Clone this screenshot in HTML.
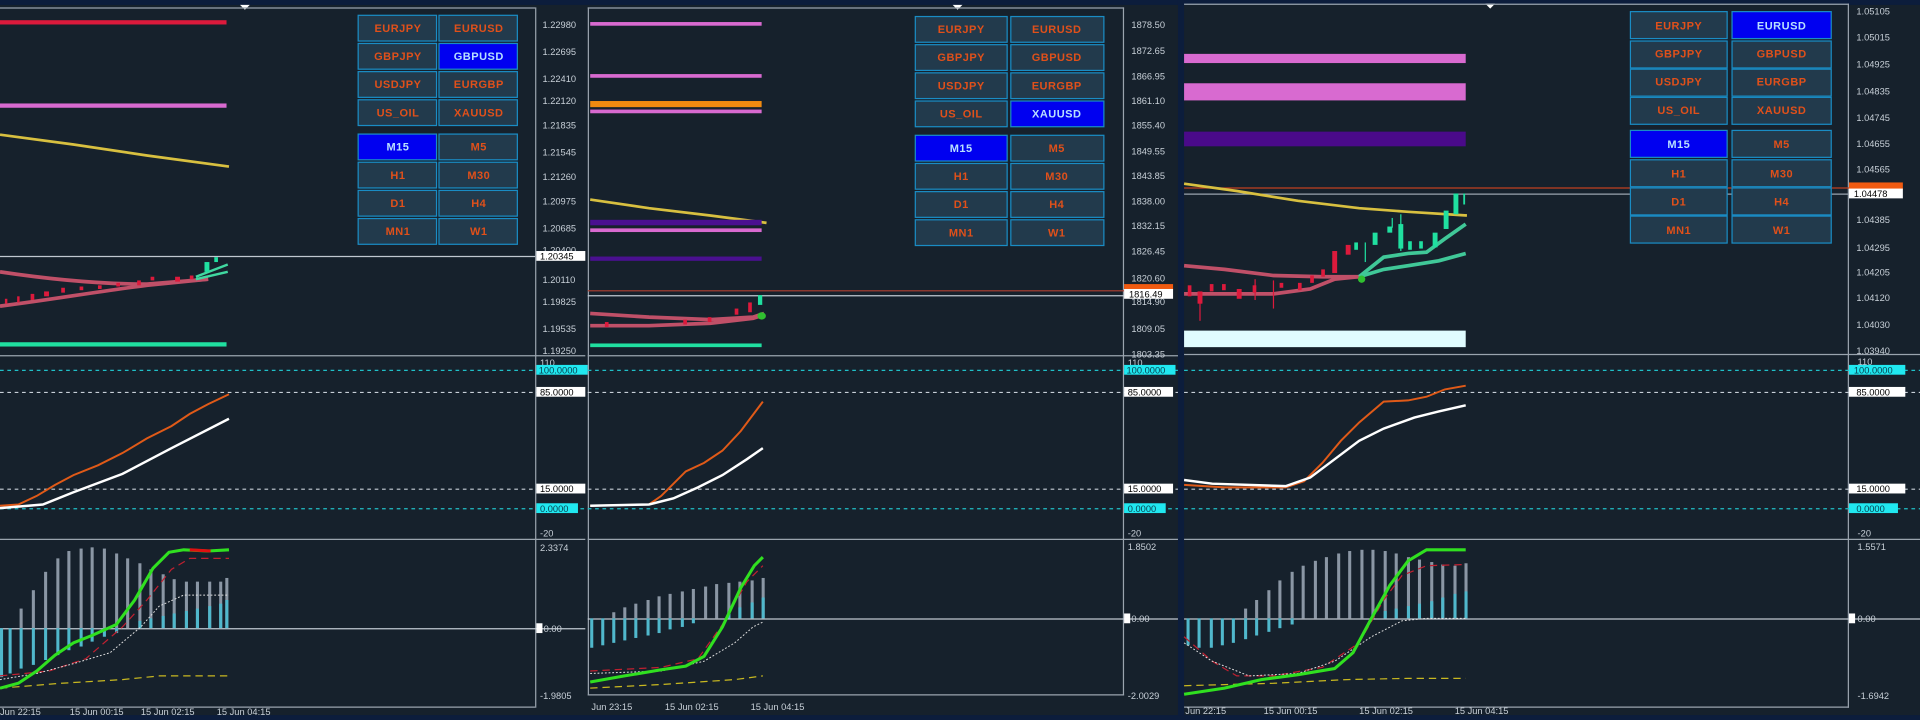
<!DOCTYPE html>
<html><head><meta charset="utf-8"><style>
html,body{margin:0;padding:0;background:#16212c;overflow:hidden}
svg{display:block}
text{font-family:"Liberation Sans",sans-serif}
.ax{fill:#c8d0d8;font-size:7.6px}
.bt{fill:#e0501a;font-size:9px;font-weight:bold;text-anchor:middle;letter-spacing:0.4px}
.bs{fill:#b8e0ff;font-size:9px;font-weight:bold;text-anchor:middle;letter-spacing:0.4px}
.dt{fill:#c8d0d8;font-size:7.6px}
</style></head><body>
<svg width="1920" height="720" viewBox="0 0 1568 588" preserveAspectRatio="none" xmlns="http://www.w3.org/2000/svg">
<defs>
<g id="btn">
<rect x="0.5" y="0.5" width="64" height="21" fill="#223a4c" stroke="#1a8cc4"/>
</g>
</defs>
<rect width="1568" height="588" fill="#16212c"/>
<!-- top strip -->
<rect x="0" y="0" width="1568" height="4" fill="#0c1d3c"/>
<rect x="962" y="0" width="5" height="588" fill="#0c1d3c"/>
<rect x="0" y="584" width="1568" height="4" fill="#0c1d3c"/>
<!-- top triangles -->
<path d="M196 4 L204 4 L200 8 Z" fill="#fff"/>
<path d="M778 4 L786 4 L782 8 Z" fill="#fff"/>
<path d="M1213 3 L1221 3 L1217 7 Z" fill="#fff"/>

<!-- ================= PANEL 1 ================= -->
<g stroke="#9aa4ae" stroke-width="1" fill="none">
<line x1="0" y1="6.5" x2="437" y2="6.5"/>
<line x1="437.5" y1="6" x2="437.5" y2="578"/>
<line x1="0" y1="290.5" x2="478" y2="290.5"/>
<line x1="0" y1="440.5" x2="478" y2="440.5"/>
<line x1="0" y1="577.5" x2="437" y2="577.5"/>
</g>
<rect x="0" y="16.5" width="185" height="3.5" fill="#dc1a3c"/>
<rect x="0" y="84.5" width="185" height="3.5" fill="#d86ad0"/>
<path d="M0 110 L60 118 L120 127 L187 136" stroke="#d8c040" stroke-width="2.2" fill="none"/>
<line x1="0" y1="209.5" x2="437" y2="209.5" stroke="#c0c8d0" stroke-width="1"/>
<path d="M0 222 C40 228 80 232 120 232 L170 228" stroke="#c05068" stroke-width="3" fill="none"/>
<path d="M0 250 C40 245 80 238 120 233 L170 228" stroke="#c05068" stroke-width="3" fill="none"/>
<g fill="#dc1a3c">
<rect x="4" y="244" width="2" height="4"/><rect x="14" y="242" width="2" height="5"/><rect x="25" y="240" width="3" height="5"/><rect x="36" y="238" width="4" height="4"/><rect x="50" y="235" width="3" height="4"/><rect x="65" y="234" width="3" height="3"/><rect x="80" y="233" width="3" height="3"/><rect x="95" y="231" width="3" height="3"/><rect x="112" y="229" width="3" height="4"/><rect x="123" y="226" width="3" height="3"/><rect x="143" y="226" width="4" height="4"/><rect x="155" y="225" width="3" height="3"/>
</g>
<path d="M160 226 L186 216 M160 228 L186 222" stroke="#40d8a0" stroke-width="2" fill="none"/>
<rect x="167" y="214" width="4" height="8" fill="#20e0a0"/><rect x="175" y="210" width="3" height="4" fill="#20e0a0"/>
<rect x="0" y="279.5" width="185" height="3.5" fill="#20e0a0"/>
<!-- buttons panel1 -->
<g transform="translate(292,12)"><use href="#btn"/></g><g transform="translate(358,12)"><use href="#btn"/></g>
<g transform="translate(292,35)"><use href="#btn"/></g><rect x="358.5" y="35.5" width="64" height="21" fill="#0000f0" stroke="#1a8cc4"/>
<g transform="translate(292,58)"><use href="#btn"/></g><g transform="translate(358,58)"><use href="#btn"/></g>
<g transform="translate(292,81)"><use href="#btn"/></g><g transform="translate(358,81)"><use href="#btn"/></g>
<rect x="292.5" y="109.5" width="64" height="21" fill="#0000f0" stroke="#1a8cc4"/><g transform="translate(358,109)"><use href="#btn"/></g>
<g transform="translate(292,132)"><use href="#btn"/></g><g transform="translate(358,132)"><use href="#btn"/></g>
<g transform="translate(292,155)"><use href="#btn"/></g><g transform="translate(358,155)"><use href="#btn"/></g>
<g transform="translate(292,178)"><use href="#btn"/></g><g transform="translate(358,178)"><use href="#btn"/></g>
<text class="bt" x="325" y="26">EURJPY</text><text class="bt" x="391" y="26">EURUSD</text>
<text class="bt" x="325" y="49">GBPJPY</text><text class="bs" x="391" y="49">GBPUSD</text>
<text class="bt" x="325" y="72">USDJPY</text><text class="bt" x="391" y="72">EURGBP</text>
<text class="bt" x="325" y="95">US_OIL</text><text class="bt" x="391" y="95">XAUUSD</text>
<text class="bs" x="325" y="123">M15</text><text class="bt" x="391" y="123">M5</text>
<text class="bt" x="325" y="146">H1</text><text class="bt" x="391" y="146">M30</text>
<text class="bt" x="325" y="169">D1</text><text class="bt" x="391" y="169">H4</text>
<text class="bt" x="325" y="192">MN1</text><text class="bt" x="391" y="192">W1</text>
<!-- axis p1 -->
<g class="ax">
<text x="443" y="23">1.22980</text><text x="443" y="45">1.22695</text><text x="443" y="67">1.22410</text><text x="443" y="85">1.22120</text><text x="443" y="105">1.21835</text><text x="443" y="127">1.21545</text><text x="443" y="147">1.21260</text><text x="443" y="167">1.20975</text><text x="443" y="189">1.20685</text><text x="443" y="207">1.20400</text><text x="443" y="231">1.20110</text><text x="443" y="249">1.19825</text><text x="443" y="271">1.19535</text><text x="443" y="289">1.19250</text>
</g>
<rect x="438" y="205" width="40" height="8" fill="#fff"/><text x="441" y="212" style="fill:#000;font-size:7.6px">1.20345</text>
<!-- stoch p1 -->
<g stroke-dasharray="3,3" stroke-width="1" fill="none">
<line x1="0" y1="302.5" x2="478" y2="302.5" stroke="#20c0c8"/>
<line x1="0" y1="320.5" x2="478" y2="320.5" stroke="#c8d0d8"/>
<line x1="0" y1="399.5" x2="478" y2="399.5" stroke="#c8d0d8"/>
<line x1="0" y1="415.5" x2="478" y2="415.5" stroke="#20c0c8"/>
</g>
<path d="M0 413 L15 412 L30 405 L45 396 L60 388 L80 380 L100 370 L120 358 L140 348 L155 338 L170 330 L187 322" stroke="#e05a18" stroke-width="1.6" fill="none"/>
<path d="M0 415 L35 412 L60 402 L100 387 L140 366 L187 342" stroke="#ffffff" stroke-width="2" fill="none"/>
<text class="ax" x="441" y="299">110</text>
<rect x="438" y="298" width="42" height="8" fill="#20e8f0"/><text x="440" y="305" style="fill:#084050;font-size:7.6px">100.0000</text>
<rect x="438" y="316" width="40" height="8" fill="#fff"/><text x="441" y="323" style="fill:#000;font-size:7.6px">85.0000</text>
<rect x="438" y="395" width="40" height="8" fill="#fff"/><text x="441" y="402" style="fill:#000;font-size:7.6px">15.0000</text>
<rect x="438" y="411" width="34" height="8" fill="#20e8f0"/><text x="441" y="418" style="fill:#084050;font-size:7.6px">0.0000</text>
<text class="ax" x="441" y="438">-20</text>
<!-- macd p1 -->
<line x1="0" y1="513.5" x2="478" y2="513.5" stroke="#c0c8d0" stroke-width="1"/>
<g fill="#8a96a4">
<rect x="16" y="497" width="2.5" height="16"/><rect x="26" y="482" width="2.5" height="31"/><rect x="36" y="467" width="2.5" height="46"/><rect x="46" y="456" width="2.5" height="57"/><rect x="55" y="450" width="2.5" height="63"/><rect x="65" y="448" width="2.5" height="65"/><rect x="74" y="447" width="2.5" height="66"/><rect x="84" y="448" width="2.5" height="65"/><rect x="94" y="452" width="2.5" height="61"/><rect x="103" y="456" width="2.5" height="57"/><rect x="113" y="460" width="2.5" height="53"/><rect x="122" y="465" width="2.5" height="48"/><rect x="132" y="469" width="2.5" height="44"/><rect x="141" y="473" width="2.5" height="40"/><rect x="151" y="475" width="2.5" height="38"/><rect x="160" y="475" width="2.5" height="38"/><rect x="170" y="475" width="2.5" height="38"/><rect x="179" y="475" width="2.5" height="38"/><rect x="184" y="472" width="2.5" height="41"/>
</g>
<g fill="#50b8cc">
<rect x="0" y="513" width="2.5" height="40"/><rect x="7" y="513" width="2.5" height="37"/><rect x="16" y="513" width="2.5" height="33"/><rect x="26" y="513" width="2.5" height="30"/><rect x="36" y="513" width="2.5" height="26"/><rect x="46" y="513" width="2.5" height="22"/><rect x="55" y="513" width="2.5" height="18"/><rect x="65" y="513" width="2.5" height="15"/><rect x="74" y="513" width="2.5" height="11"/><rect x="84" y="513" width="2.5" height="7"/><rect x="94" y="513" width="2.5" height="4"/>
<rect x="113" y="507" width="2.5" height="6"/><rect x="122" y="505" width="2.5" height="8"/><rect x="132" y="503" width="2.5" height="10"/><rect x="141" y="501" width="2.5" height="12"/><rect x="151" y="499" width="2.5" height="14"/><rect x="160" y="497" width="2.5" height="16"/><rect x="170" y="495" width="2.5" height="18"/><rect x="179" y="493" width="2.5" height="20"/><rect x="184" y="490" width="2.5" height="23"/>
</g>
<path d="M0 552 L20 550 L40 548 L70 538 L100 512 L120 490 L140 465 L155 456 L187 456" stroke="#c02030" stroke-width="1" stroke-dasharray="6,4" fill="none"/>
<path d="M0 555 L30 550 L60 542 L90 533 L115 512 L130 495 L150 486 L187 486" stroke="#e0e0e0" stroke-width="0.8" stroke-dasharray="1.5,1.5" fill="none"/>
<path d="M0 562 L50 558 L100 555 L130 552 L187 552" stroke="#c8b820" stroke-width="1" stroke-dasharray="6,4" fill="none"/>
<path d="M0 562 L15 558 L30 548 L45 535 L60 525 L75 519 L95 510 L110 490 L125 464 L138 451 L150 449 L170 450 L187 449" stroke="#30e020" stroke-width="2.5" fill="none"/>
<path d="M155 449 L172 450" stroke="#e01010" stroke-width="2.5"/>
<g class="ax"><text x="441" y="450">2.3374</text><text x="441" y="571">-1.9805</text></g>
<rect x="438" y="509" width="5" height="8" fill="#fff"/><text class="ax" x="444" y="516">0.00</text>
<g class="dt"><text x="0" y="584">Jun 22:15</text><text x="57" y="584">15 Jun 00:15</text><text x="115" y="584">15 Jun 02:15</text><text x="177" y="584">15 Jun 04:15</text></g>

<!-- ================= PANEL 2 ================= -->
<g stroke="#9aa4ae" stroke-width="1" fill="none">
<line x1="480" y1="6.5" x2="918" y2="6.5"/>
<line x1="480.5" y1="6" x2="480.5" y2="568"/>
<line x1="917.5" y1="6" x2="917.5" y2="568"/>
<line x1="480" y1="290.5" x2="962" y2="290.5"/>
<line x1="480" y1="440.5" x2="962" y2="440.5"/>
<line x1="480" y1="567.5" x2="918" y2="567.5"/>
</g>
<rect x="482" y="18" width="140" height="3" fill="#d86ad0"/>
<rect x="482" y="60.5" width="140" height="3" fill="#d86ad0"/>
<rect x="482" y="82.5" width="140" height="5" fill="#f08a10"/>
<rect x="482" y="89.5" width="140" height="3" fill="#d86ad0"/>
<path d="M482 163 L530 170 L580 176 L626 182" stroke="#d8c040" stroke-width="2.2" fill="none"/>
<rect x="482" y="179.5" width="140" height="4.5" fill="#4a1090"/>
<rect x="482" y="186.5" width="140" height="3" fill="#d86ad0"/>
<rect x="482" y="209.5" width="140" height="3.5" fill="#4a1090"/>
<line x1="480" y1="237.5" x2="918" y2="237.5" stroke="#b04030" stroke-width="1"/>
<line x1="480" y1="241.5" x2="918" y2="241.5" stroke="#c0c8d0" stroke-width="1"/>
<path d="M482 256 L530 259 L580 261 L615 259 L624 256" stroke="#c05068" stroke-width="3" fill="none"/>
<path d="M482 266 L530 266 L580 264 L615 260 L624 257" stroke="#c05068" stroke-width="3" fill="none"/>
<g fill="#dc1a3c"><rect x="494" y="263" width="3" height="4"/><rect x="558" y="261" width="3" height="4"/><rect x="578" y="259" width="3" height="4"/><rect x="600" y="252" width="3" height="5"/><rect x="611" y="247" width="3" height="8"/></g>
<rect x="619" y="241" width="3.5" height="8" fill="#20e0a0"/>
<ellipse cx="622" cy="258" rx="3.5" ry="3" fill="#30c030"/>
<rect x="482" y="280.5" width="140" height="3" fill="#20e0a0"/>
<!-- buttons panel2 -->
<g fill="#223a4c" stroke="#1a8cc4">
<rect x="747.5" y="13.5" width="75" height="21"/><rect x="825.5" y="13.5" width="76" height="21"/>
<rect x="747.5" y="36.5" width="75" height="21"/><rect x="825.5" y="36.5" width="76" height="21"/>
<rect x="747.5" y="59.5" width="75" height="21"/><rect x="825.5" y="59.5" width="76" height="21"/>
<rect x="747.5" y="82.5" width="75" height="21"/><rect x="825.5" y="82.5" width="76" height="21" fill="#0000f0"/>
<rect x="747.5" y="110.5" width="75" height="21" fill="#0000f0"/><rect x="825.5" y="110.5" width="76" height="21"/>
<rect x="747.5" y="133.5" width="75" height="21"/><rect x="825.5" y="133.5" width="76" height="21"/>
<rect x="747.5" y="156.5" width="75" height="21"/><rect x="825.5" y="156.5" width="76" height="21"/>
<rect x="747.5" y="179.5" width="75" height="21"/><rect x="825.5" y="179.5" width="76" height="21"/>
</g>
<text class="bt" x="785" y="27">EURJPY</text><text class="bt" x="863" y="27">EURUSD</text>
<text class="bt" x="785" y="50">GBPJPY</text><text class="bt" x="863" y="50">GBPUSD</text>
<text class="bt" x="785" y="73">USDJPY</text><text class="bt" x="863" y="73">EURGBP</text>
<text class="bt" x="785" y="96">US_OIL</text><text class="bs" x="863" y="96">XAUUSD</text>
<text class="bs" x="785" y="124">M15</text><text class="bt" x="863" y="124">M5</text>
<text class="bt" x="785" y="147">H1</text><text class="bt" x="863" y="147">M30</text>
<text class="bt" x="785" y="170">D1</text><text class="bt" x="863" y="170">H4</text>
<text class="bt" x="785" y="193">MN1</text><text class="bt" x="863" y="193">W1</text>
<g class="ax">
<text x="924" y="23">1878.50</text><text x="924" y="44">1872.65</text><text x="924" y="65">1866.95</text><text x="924" y="85">1861.10</text><text x="924" y="105">1855.40</text><text x="924" y="126">1849.55</text><text x="924" y="146">1843.85</text><text x="924" y="167">1838.00</text><text x="924" y="187">1832.15</text><text x="924" y="208">1826.45</text><text x="924" y="230">1820.60</text><text x="924" y="249">1814.90</text><text x="924" y="271">1809.05</text><text x="924" y="292">1803.35</text>
</g>
<rect x="918" y="232" width="40" height="5" fill="#f05a10"/>
<rect x="918" y="236" width="40" height="8" fill="#fff"/><text x="922" y="243" style="fill:#000;font-size:7.6px">1816.49</text>
<!-- stoch p2 -->
<g stroke-dasharray="3,3" stroke-width="1" fill="none">
<line x1="480" y1="302.5" x2="962" y2="302.5" stroke="#20c0c8"/>
<line x1="480" y1="320.5" x2="962" y2="320.5" stroke="#c8d0d8"/>
<line x1="480" y1="399.5" x2="962" y2="399.5" stroke="#c8d0d8"/>
<line x1="480" y1="415.5" x2="962" y2="415.5" stroke="#20c0c8"/>
</g>
<path d="M482 413 L530 412 L540 405 L550 395 L560 385 L575 378 L590 368 L605 352 L623 328" stroke="#e05a18" stroke-width="1.6" fill="none"/>
<path d="M482 413 L530 412 L550 407 L570 398 L590 388 L610 375 L623 366" stroke="#ffffff" stroke-width="2" fill="none"/>
<text class="ax" x="921" y="299">110</text>
<rect x="918" y="298" width="42" height="8" fill="#20e8f0"/><text x="920" y="305" style="fill:#084050;font-size:7.6px">100.0000</text>
<rect x="918" y="316" width="40" height="8" fill="#fff"/><text x="921" y="323" style="fill:#000;font-size:7.6px">85.0000</text>
<rect x="918" y="395" width="40" height="8" fill="#fff"/><text x="921" y="402" style="fill:#000;font-size:7.6px">15.0000</text>
<rect x="918" y="411" width="34" height="8" fill="#20e8f0"/><text x="921" y="418" style="fill:#084050;font-size:7.6px">0.0000</text>
<text class="ax" x="921" y="438">-20</text>
<!-- macd p2 -->
<line x1="480" y1="505.5" x2="962" y2="505.5" stroke="#c0c8d0" stroke-width="1"/>
<g fill="#8a96a4">
<rect x="500" y="500" width="2.5" height="5"/><rect x="509" y="496" width="2.5" height="9"/><rect x="518" y="493" width="2.5" height="12"/><rect x="528" y="490" width="2.5" height="15"/><rect x="537" y="487" width="2.5" height="18"/><rect x="546" y="485" width="2.5" height="20"/><rect x="556" y="483" width="2.5" height="22"/><rect x="565" y="481" width="2.5" height="24"/><rect x="575" y="479" width="2.5" height="26"/><rect x="584" y="477" width="2.5" height="28"/><rect x="594" y="476" width="2.5" height="29"/><rect x="603" y="475" width="2.5" height="30"/><rect x="613" y="474" width="2.5" height="31"/><rect x="622" y="472" width="2.5" height="33"/>
</g>
<g fill="#50b8cc">
<rect x="482" y="505" width="2.5" height="24"/><rect x="491" y="505" width="2.5" height="22"/><rect x="500" y="505" width="2.5" height="20"/><rect x="509" y="505" width="2.5" height="18"/><rect x="518" y="505" width="2.5" height="16"/><rect x="528" y="505" width="2.5" height="14"/><rect x="537" y="505" width="2.5" height="12"/><rect x="546" y="505" width="2.5" height="9"/><rect x="556" y="505" width="2.5" height="7"/><rect x="565" y="505" width="2.5" height="4"/>
<rect x="594" y="500" width="2.5" height="5"/><rect x="603" y="496" width="2.5" height="9"/><rect x="613" y="492" width="2.5" height="13"/><rect x="622" y="488" width="2.5" height="17"/>
</g>
<path d="M482 548 L540 545 L570 538 L590 510 L610 475 L623 462" stroke="#c02030" stroke-width="1" stroke-dasharray="6,4" fill="none"/>
<path d="M482 550 L540 548 L575 540 L600 525 L615 512 L623 508" stroke="#e0e0e0" stroke-width="0.8" stroke-dasharray="1.5,1.5" fill="none"/>
<path d="M482 562 L540 559 L600 555 L623 552" stroke="#c8b820" stroke-width="1" stroke-dasharray="6,4" fill="none"/>
<path d="M482 557 L510 552 L540 547 L560 544 L575 536 L590 512 L605 480 L616 462 L623 455" stroke="#30e020" stroke-width="2.5" fill="none"/>
<g class="ax"><text x="921" y="449">1.8502</text><text x="921" y="571">-2.0029</text></g>
<rect x="918" y="501" width="5" height="8" fill="#fff"/><text class="ax" x="924" y="508">0.00</text>
<g class="dt"><text x="483" y="580">Jun 23:15</text><text x="543" y="580">15 Jun 02:15</text><text x="613" y="580">15 Jun 04:15</text></g>

<!-- ================= PANEL 3 ================= -->
<g stroke="#9aa4ae" stroke-width="1" fill="none">
<line x1="967" y1="3.5" x2="1510" y2="3.5"/>
<line x1="1509.5" y1="3" x2="1509.5" y2="578"/>
<line x1="967" y1="289.5" x2="1568" y2="289.5"/>
<line x1="967" y1="440.5" x2="1568" y2="440.5"/>
<line x1="967" y1="577.5" x2="1510" y2="577.5"/>
</g>
<rect x="967" y="44" width="230" height="7.5" fill="#d86ad0"/>
<rect x="967" y="68" width="230" height="14" fill="#d86ad0"/>
<rect x="967" y="107.5" width="230" height="12" fill="#4a0a8a"/>
<rect x="967" y="270" width="230" height="13.5" fill="#e0fcff"/>
<line x1="967" y1="153.5" x2="1510" y2="153.5" stroke="#c04020" stroke-width="1"/>
<line x1="967" y1="158.5" x2="1510" y2="158.5" stroke="#9aa4ae" stroke-width="1"/>
<path d="M967 150 L1010 156 L1060 164 L1110 170 L1150 173 L1198 176" stroke="#d8c040" stroke-width="2.2" fill="none"/>
<path d="M967 217 L1000 220 L1040 225 L1080 226 L1110 226" stroke="#c05068" stroke-width="3" fill="none"/>
<path d="M967 240 L1000 240 L1040 240 L1070 236 L1090 228 L1110 226" stroke="#c05068" stroke-width="3" fill="none"/>
<path d="M1110 226 L1130 210 L1150 207 L1165 206 L1180 195 L1197 183" stroke="#40c898" stroke-width="3" fill="none"/>
<path d="M1110 226 L1130 220 L1150 217 L1175 213 L1197 207" stroke="#40c898" stroke-width="3" fill="none"/>
<circle cx="1112" cy="228" r="3" fill="#30c030"/>
<g fill="#dc1a3c">
<rect x="970" y="233" width="3" height="9"/><rect x="978" y="238" width="4" height="10"/><rect x="988" y="232" width="3" height="6"/><rect x="998" y="232" width="3" height="5"/><rect x="1010" y="236" width="4" height="8"/><rect x="1023" y="233" width="3" height="6"/><rect x="1045" y="231" width="3" height="4"/><rect x="1060" y="231" width="3" height="6"/><rect x="1070" y="225" width="3" height="6"/><rect x="1079" y="220" width="3" height="6"/><rect x="1088" y="205" width="4" height="18"/><rect x="1099" y="200" width="4" height="8"/>
</g>
<g stroke="#dc1a3c" stroke-width="1"><line x1="980" y1="245" x2="980" y2="262"/><line x1="1040" y1="229" x2="1040" y2="252"/><line x1="1025" y1="228" x2="1025" y2="245"/></g>
<g fill="#20e0a0">
<rect x="1106" y="198" width="3" height="6"/><rect x="1121" y="190" width="4" height="10"/><rect x="1133" y="185" width="4" height="5"/><rect x="1142" y="183" width="4" height="20"/><rect x="1150" y="197" width="3" height="7"/><rect x="1159" y="197" width="3" height="6"/><rect x="1170" y="190" width="4" height="12"/><rect x="1179" y="172" width="4" height="15"/><rect x="1187" y="158" width="4" height="17"/><rect x="1195" y="158" width="1.5" height="9"/>
</g>
<g stroke="#20e0a0" stroke-width="1"><line x1="1137" y1="178" x2="1137" y2="186"/><line x1="1144" y1="175" x2="1144" y2="205"/><line x1="1115" y1="198" x2="1115" y2="214"/></g>
<!-- buttons panel3 -->
<g fill="#223a4c" stroke="#1a8cc4">
<rect x="1331.5" y="9.5" width="79" height="22" fill="#223a4c"/><rect x="1414.5" y="9.5" width="81" height="22" fill="#0000f0"/>
<rect x="1331.5" y="33.5" width="79" height="22"/><rect x="1414.5" y="33.5" width="81" height="22"/>
<rect x="1331.5" y="56.5" width="79" height="22"/><rect x="1414.5" y="56.5" width="81" height="22"/>
<rect x="1331.5" y="79.5" width="79" height="22"/><rect x="1414.5" y="79.5" width="81" height="22"/>
<rect x="1331.5" y="106.5" width="79" height="22" fill="#0000f0"/><rect x="1414.5" y="106.5" width="81" height="22"/>
<rect x="1331.5" y="130.5" width="79" height="22"/><rect x="1414.5" y="130.5" width="81" height="22"/>
<rect x="1331.5" y="153.5" width="79" height="22"/><rect x="1414.5" y="153.5" width="81" height="22"/>
<rect x="1331.5" y="176.5" width="79" height="22"/><rect x="1414.5" y="176.5" width="81" height="22"/>
</g>
<text class="bt" x="1371" y="24">EURJPY</text><text class="bs" x="1455" y="24">EURUSD</text>
<text class="bt" x="1371" y="47">GBPJPY</text><text class="bt" x="1455" y="47">GBPUSD</text>
<text class="bt" x="1371" y="70">USDJPY</text><text class="bt" x="1455" y="70">EURGBP</text>
<text class="bt" x="1371" y="93">US_OIL</text><text class="bt" x="1455" y="93">XAUUSD</text>
<text class="bs" x="1371" y="121">M15</text><text class="bt" x="1455" y="121">M5</text>
<text class="bt" x="1371" y="145">H1</text><text class="bt" x="1455" y="145">M30</text>
<text class="bt" x="1371" y="168">D1</text><text class="bt" x="1455" y="168">H4</text>
<text class="bt" x="1371" y="191">MN1</text><text class="bt" x="1455" y="191">W1</text>
<g class="ax">
<text x="1516" y="12">1.05105</text><text x="1516" y="33">1.05015</text><text x="1516" y="55">1.04925</text><text x="1516" y="77">1.04835</text><text x="1516" y="99">1.04745</text><text x="1516" y="120">1.04655</text><text x="1516" y="141">1.04565</text><text x="1516" y="182">1.04385</text><text x="1516" y="205">1.04295</text><text x="1516" y="225">1.04205</text><text x="1516" y="246">1.04120</text><text x="1516" y="268">1.04030</text><text x="1516" y="289">1.03940</text>
</g>
<rect x="1510" y="149" width="44" height="6" fill="#f05a10"/>
<rect x="1510" y="154" width="44" height="8" fill="#fff"/><text x="1514" y="161" style="fill:#000;font-size:7.6px">1.04478</text>
<!-- stoch p3 -->
<g stroke-dasharray="3,3" stroke-width="1" fill="none">
<line x1="967" y1="302.5" x2="1568" y2="302.5" stroke="#20c0c8"/>
<line x1="967" y1="320.5" x2="1568" y2="320.5" stroke="#c8d0d8"/>
<line x1="967" y1="399.5" x2="1568" y2="399.5" stroke="#c8d0d8"/>
<line x1="967" y1="415.5" x2="1568" y2="415.5" stroke="#20c0c8"/>
</g>
<path d="M967 396 L1000 398 L1050 398 L1065 393 L1080 378 L1095 360 L1110 345 L1130 328 L1150 327 L1165 324 L1180 318 L1197 315" stroke="#e05a18" stroke-width="1.6" fill="none"/>
<path d="M967 392 L990 395 L1050 397 L1070 390 L1090 375 L1110 360 L1130 350 L1155 341 L1175 336 L1197 331" stroke="#ffffff" stroke-width="2" fill="none"/>
<text class="ax" x="1517" y="298">110</text>
<rect x="1510" y="298" width="46" height="8" fill="#20e8f0"/><text x="1514" y="305" style="fill:#084050;font-size:7.6px">100.0000</text>
<rect x="1510" y="316" width="46" height="8" fill="#fff"/><text x="1516" y="323" style="fill:#000;font-size:7.6px">85.0000</text>
<rect x="1510" y="395" width="46" height="8" fill="#fff"/><text x="1516" y="402" style="fill:#000;font-size:7.6px">15.0000</text>
<rect x="1510" y="411" width="40" height="8" fill="#20e8f0"/><text x="1516" y="418" style="fill:#084050;font-size:7.6px">0.0000</text>
<text class="ax" x="1517" y="438">-20</text>
<!-- macd p3 -->
<line x1="967" y1="505.5" x2="1568" y2="505.5" stroke="#c0c8d0" stroke-width="1"/>
<g fill="#8a96a4">
<rect x="1016" y="497" width="2.5" height="8"/><rect x="1025" y="490" width="2.5" height="15"/><rect x="1035" y="482" width="2.5" height="23"/><rect x="1044" y="474" width="2.5" height="31"/><rect x="1054" y="467" width="2.5" height="38"/><rect x="1063" y="462" width="2.5" height="43"/><rect x="1073" y="458" width="2.5" height="47"/><rect x="1082" y="455" width="2.5" height="50"/><rect x="1092" y="452" width="2.5" height="53"/><rect x="1101" y="450" width="2.5" height="55"/><rect x="1111" y="449" width="2.5" height="56"/><rect x="1120" y="449" width="2.5" height="56"/><rect x="1130" y="450" width="2.5" height="55"/><rect x="1139" y="452" width="2.5" height="53"/><rect x="1149" y="455" width="2.5" height="50"/><rect x="1158" y="457" width="2.5" height="48"/><rect x="1168" y="459" width="2.5" height="46"/><rect x="1177" y="461" width="2.5" height="44"/><rect x="1187" y="462" width="2.5" height="43"/><rect x="1196" y="460" width="2.5" height="45"/>
</g>
<g fill="#50b8cc">
<rect x="969" y="505" width="2.5" height="22"/><rect x="978" y="505" width="2.5" height="24"/><rect x="988" y="505" width="2.5" height="24"/><rect x="997" y="505" width="2.5" height="22"/><rect x="1006" y="505" width="2.5" height="20"/><rect x="1016" y="505" width="2.5" height="17"/><rect x="1025" y="505" width="2.5" height="14"/><rect x="1035" y="505" width="2.5" height="11"/><rect x="1044" y="505" width="2.5" height="8"/><rect x="1054" y="505" width="2.5" height="5"/>
<rect x="1120" y="501" width="2.5" height="4"/><rect x="1130" y="499" width="2.5" height="6"/><rect x="1139" y="497" width="2.5" height="8"/><rect x="1149" y="495" width="2.5" height="10"/><rect x="1158" y="493" width="2.5" height="12"/><rect x="1168" y="491" width="2.5" height="14"/><rect x="1177" y="488" width="2.5" height="17"/><rect x="1187" y="485" width="2.5" height="20"/><rect x="1196" y="483" width="2.5" height="22"/>
</g>
<path d="M967 520 L990 540 L1010 552 L1040 552 L1080 545 L1110 525 L1130 490 L1145 470 L1165 462 L1197 461" stroke="#c02030" stroke-width="1" stroke-dasharray="6,4" fill="none"/>
<path d="M967 525 L990 540 L1020 552 L1060 550 L1090 540 L1120 520 L1145 507 L1165 505 L1197 505" stroke="#e0e0e0" stroke-width="0.8" stroke-dasharray="1.5,1.5" fill="none"/>
<path d="M967 560 L1040 558 L1100 555 L1150 554 L1197 554" stroke="#c8b820" stroke-width="1" stroke-dasharray="6,4" fill="none"/>
<path d="M967 567 L1000 562 L1030 555 L1060 551 L1090 546 L1105 533 L1120 505 L1135 478 L1150 458 L1165 449 L1197 449" stroke="#30e020" stroke-width="2.5" fill="none"/>
<g class="ax"><text x="1517" y="449">1.5571</text><text x="1517" y="571">-1.6942</text></g>
<rect x="1510" y="501" width="5" height="8" fill="#fff"/><text class="ax" x="1517" y="508">0.00</text>
<g class="dt"><text x="968" y="583">Jun 22:15</text><text x="1032" y="583">15 Jun 00:15</text><text x="1110" y="583">15 Jun 02:15</text><text x="1188" y="583">15 Jun 04:15</text></g>
</svg>
</body></html>
